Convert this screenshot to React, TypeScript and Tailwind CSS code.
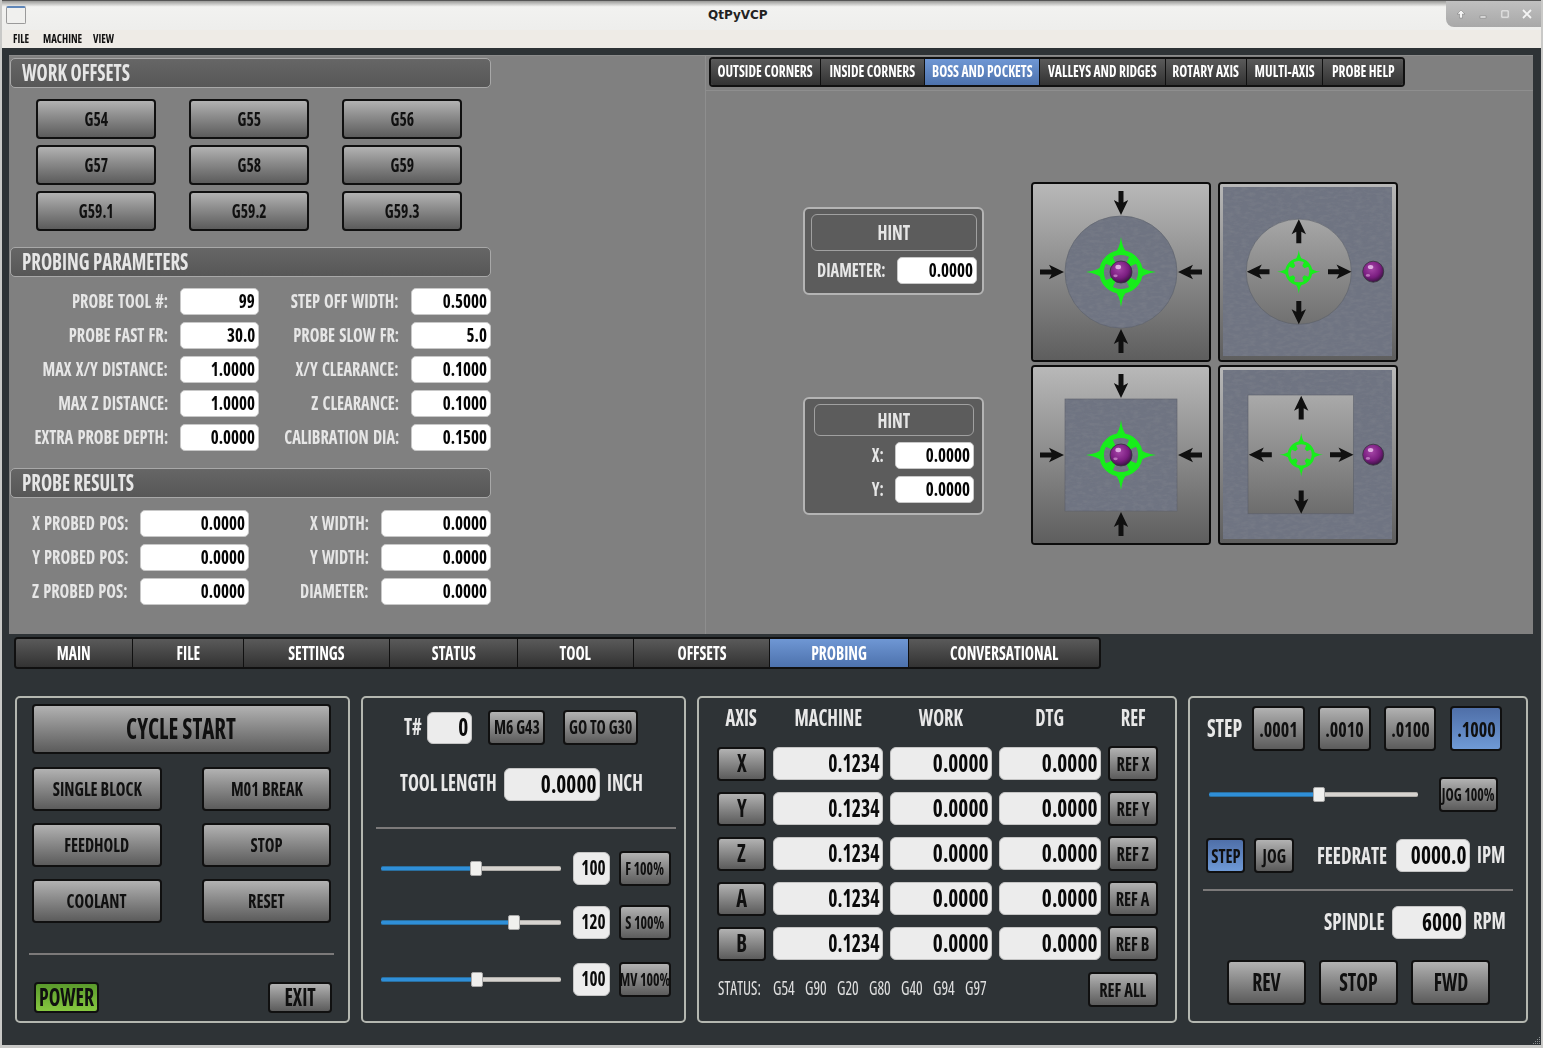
import React from "react";

const btn = "flex items-center justify-center border-2 border-[#101010] rounded-[4px] bg-linear-to-b from-[#b2b2b2] to-[#5c5c5c] text-[#101010]";
const blue = "flex items-center justify-center border-2 border-[#101010] rounded-[4px] bg-linear-to-b from-[#4f6fa8] to-[#6f9ad6] text-[#101010]";
const whiteIn = "flex items-center justify-end bg-white border border-[#c8c8c8] rounded-[5px] text-[#050505] pr-[3px] pb-[1px] h-[27px] text-[20px]";
const grayIn = "flex items-center justify-end bg-[#ececec] border border-[#c4c4c4] rounded-[6px] text-[#0a0a0a] pr-[3px] pb-[2px]";
const label = "flex justify-end text-[#e6e6e6] text-[20px] [word-spacing:1.5px] pb-[1px]";
const header = "ml-[1px] w-[481px] h-[30px] flex items-center pl-[11px] pb-[2px] rounded-[5px] border border-[#a8a8a8] bg-linear-to-b from-[#666666] to-[#575757] text-[#e6e6e6] text-[23px]";
const tabOff = "bg-linear-to-b from-[#5a5a5a] to-[#333333]";
const tabOn = "bg-linear-to-b from-[#6f97d4] to-[#4d72ad]";
const divider = "h-[2px] bg-[#7c7a7a]";

type Origin = "c" | "l" | "r" | "w" | "d";
function T({ children, o = "c" }: { children: React.ReactNode; o?: Origin }) {
  const cls = {
    c: "scale-x-[.82] origin-center",
    l: "scale-x-[.82] origin-left",
    r: "scale-x-[.82] origin-right",
    w: "scale-x-[.85] origin-right",
    d: "scale-x-[.89] origin-right",
  }[o];
  return <span className={`inline-block whitespace-nowrap ${cls}`}>{children}</span>;
}

function Arrow({ x1, y1, x2, y2 }: { x1: number; y1: number; x2: number; y2: number }) {
  const a = (Math.atan2(y2 - y1, x2 - x1) * 180) / Math.PI;
  const L = Math.hypot(x2 - x1, y2 - y1);
  return (
    <g transform={`translate(${x1} ${y1}) rotate(${a})`}>
      <path d={`M0,-2.5 L${L - 12.5},-2.5 L${L - 15},-7.2 L${L},0 L${L - 15},7.2 L${L - 12.5},2.5 L0,2.5 Z`} fill="#101010" />
    </g>
  );
}

function Target({ cx, cy, k }: { cx: number; cy: number; k: number }) {
  const spike = "M-6.5,-18.5 Q-1.5,-23 0,-35 Q1.5,-23 6.5,-18.5 Z";
  const tab = "M-6,-19 L6,-19 L2.5,-10.5 L-2.5,-10.5 Z";
  return (
    <g transform={`translate(${cx} ${cy}) scale(${k})`}>
      {[0, 90, 180, 270].map((r) => (
        <path key={r} d={spike} fill="#17ee1b" transform={`rotate(${r})`} />
      ))}
      {[45, 135, 225, 315].map((r) => (
        <path key={r} d={tab} fill="#17ee1b" transform={`rotate(${r})`} />
      ))}
      <circle r="19.4" fill="none" stroke="#17ee1b" strokeWidth="4.6" />
    </g>
  );
}

function Ball({ cx, cy, r, id }: { cx: number; cy: number; r: number; id: string }) {
  return (
    <g>
      <circle cx={cx} cy={cy} r={r} fill={`url(#${id}-ball)`} stroke="#35333c" strokeWidth="0.8" />
      <ellipse cx={cx - r * 0.25} cy={cy - r * 0.45} rx={r * 0.26} ry={r * 0.2} fill="#e6b8e8" opacity="0.9" />
      <ellipse cx={cx - r * 0.5} cy={cy + r * 0.35} rx={r * 0.2} ry={r * 0.13} fill="#c98ac9" opacity="0.8" />
    </g>
  );
}

function Diagram({ id, kind }: { id: string; kind: "boss" | "pocketRound" | "bossSquare" | "pocketSquare" }) {
  const blueFill = "#6f7482";
  const noise = `url(#${id}-n)`;
  return (
    <div className="w-[180px] h-[180px] rounded-[4px] border-2 border-[#0c0c0c] overflow-hidden">
      <svg viewBox="0 0 176 176" width="176" height="176" className="block">
        <defs>
          <linearGradient id={`${id}-g`} gradientUnits="userSpaceOnUse" x1="0" y1="0" x2="0" y2="176">
            <stop offset="0" stopColor="#b8b8b8" />
            <stop offset="1" stopColor="#5e5e5e" />
          </linearGradient>
          <radialGradient id={`${id}-ball`} cx="0.42" cy="0.35" r="0.7">
            <stop offset="0" stopColor="#a646a8" />
            <stop offset="0.6" stopColor="#7a1d80" />
            <stop offset="1" stopColor="#2f1238" />
          </radialGradient>
          <filter id={`${id}-n`} x="0" y="0" width="100%" height="100%">
            <feTurbulence type="fractalNoise" baseFrequency="0.14 0.32" numOctaves="3" seed="4" />
            <feColorMatrix values="0 0 0 0 0.24  0 0 0 0 0.25  0 0 0 0 0.28  1.6 0 0 0 -0.6" />
            <feComposite in2="SourceAlpha" operator="in" />
          </filter>
        </defs>
        <rect width="176" height="176" fill={`url(#${id}-g)`} />
        {kind === "boss" && (
          <>
            <circle cx="88" cy="88" r="56" fill={blueFill} stroke="#5a5f6a" strokeWidth="0.6" />
            <circle cx="88" cy="88" r="56" fill="#000" filter={noise} opacity="0.45" />
          </>
        )}
        {kind === "bossSquare" && (
          <>
            <rect x="32" y="32" width="112" height="112" fill={blueFill} stroke="#5a5f6a" strokeWidth="0.6" />
            <rect x="32" y="32" width="112" height="112" fill="#000" filter={noise} opacity="0.45" />
          </>
        )}
        {(kind === "pocketRound" || kind === "pocketSquare") && (
          <>
            <rect x="3" y="3" width="169" height="169" fill={blueFill} />
            <rect x="3" y="3" width="169" height="169" fill="#000" filter={noise} opacity="0.45" />
          </>
        )}
        {kind === "pocketRound" && <circle cx="78.8" cy="87.7" r="52.6" fill={`url(#${id}-g)`} stroke="#5a5f6a" strokeWidth="0.6" />}
        {kind === "pocketSquare" && <rect x="28" y="28" width="105.5" height="118.8" fill={`url(#${id}-g)`} stroke="#5a5f6a" strokeWidth="0.6" />}
        {(kind === "boss" || kind === "bossSquare") && (
          <>
            <Arrow x1={88} y1={7} x2={88} y2={31} />
            <Arrow x1={88} y1={169} x2={88} y2={145} />
            <Arrow x1={7} y1={88} x2={31} y2={88} />
            <Arrow x1={169} y1={88} x2={145} y2={88} />
            <Target cx={88} cy={88} k={1} />
            <Ball cx={88} cy={88} r={11} id={id} />
          </>
        )}
        {kind === "pocketRound" && (
          <>
            <Arrow x1={78.8} y1={59.3} x2={78.8} y2={35.3} />
            <Arrow x1={78.8} y1={117} x2={78.8} y2={140.3} />
            <Arrow x1={49.5} y1={87.7} x2={26.8} y2={87.7} />
            <Arrow x1={108} y1={87.7} x2={131.5} y2={87.7} />
            <Target cx={78.8} cy={87.7} k={0.62} />
            <Ball cx={153.2} cy={87.7} r={10.5} id={id} />
          </>
        )}
        {kind === "pocketSquare" && (
          <>
            <Arrow x1={81.2} y1={52.5} x2={81.2} y2={28.8} />
            <Arrow x1={81.2} y1={123.5} x2={81.2} y2={146.8} />
            <Arrow x1={51.8} y1={87.8} x2={28.8} y2={87.8} />
            <Arrow x1={110} y1={87.8} x2={133.5} y2={87.8} />
            <Target cx={81.2} cy={87.8} k={0.62} />
            <Ball cx={153.2} cy={87.7} r={10.5} id={id} />
          </>
        )}
      </svg>
    </div>
  );
}

function Slider({ w, left }: { w: string; left: string }) {
  return (
    <div className={`flex items-center h-[16px] ${w}`}>
      <div className={`h-[5px] bg-[#2f8fd8] rounded-l-[2px] border-y border-[#2a6f9f] ${left}`} />
      <div className="w-[12px] h-[15px] bg-[#f0f0ee] border border-[#a8a8a8] rounded-[2px] shrink-0" />
      <div className="h-[5px] flex-1 bg-[#d6d3cf] border-y border-[#b0aeaa] rounded-r-[2px]" />
    </div>
  );
}

const topTabs: [string, string, boolean][] = [
  ["OUTSIDE CORNERS", "w-[110px]", false],
  ["INSIDE CORNERS", "w-[104px]", false],
  ["BOSS AND POCKETS", "w-[115px]", true],
  ["VALLEYS AND RIDGES", "w-[126px]", false],
  ["ROTARY AXIS", "w-[81px]", false],
  ["MULTI-AXIS", "w-[76px]", false],
  ["PROBE HELP", "w-[80px]", false],
];
const mainTabs: [string, string, boolean][] = [
  ["MAIN", "w-[117px]", false],
  ["FILE", "w-[111px]", false],
  ["SETTINGS", "w-[146px]", false],
  ["STATUS", "w-[128px]", false],
  ["TOOL", "w-[116px]", false],
  ["OFFSETS", "w-[136px]", false],
  ["PROBING", "w-[139px]", true],
  ["CONVERSATIONAL", "w-[190px]", false],
];
const params: [string, string, string, string][] = [
  ["PROBE TOOL #:", "99", "STEP OFF WIDTH:", "0.5000"],
  ["PROBE FAST FR:", "30.0", "PROBE SLOW FR:", "5.0"],
  ["MAX X/Y DISTANCE:", "1.0000", "X/Y CLEARANCE:", "0.1000"],
  ["MAX Z DISTANCE:", "1.0000", "Z CLEARANCE:", "0.1000"],
  ["EXTRA PROBE DEPTH:", "0.0000", "CALIBRATION DIA:", "0.1500"],
];
const results: [string, string, string, string][] = [
  ["X PROBED POS:", "0.0000", "X WIDTH:", "0.0000"],
  ["Y PROBED POS:", "0.0000", "Y WIDTH:", "0.0000"],
  ["Z PROBED POS:", "0.0000", "DIAMETER:", "0.0000"],
];
const offs = ["G54", "G55", "G56", "G57", "G58", "G59", "G59.1", "G59.2", "G59.3"];
const overrides = [
  { mt: "mt-[22px]", left: "w-[89px]", n: "100", t: "F 100%" },
  { mt: "mt-[19px]", left: "w-[127px]", n: "120", t: "S 100%" },
  { mt: "mt-[22px]", left: "w-[90px]", n: "100", t: "MV 100%" },
];

export default function App() {
  return (
    <div className="relative w-[1543px] h-[1048px] overflow-hidden flex flex-col bg-[#2e3336] border-x-2 border-b-[3px] border-[#c9c9c7] font-['Open_Sans',sans-serif] font-stretch-condensed font-bold leading-none">
      {/* title bar */}
      <div className="h-[30px] -mx-[2px] grid grid-cols-[708px_auto_1fr] bg-linear-to-b from-[#9a9a98] via-[#f2f2f0] via-[20%] to-[#eeeeec] border-t border-[#555]">
        <div className="pl-[6px] pt-[5px]">
          <div className="w-[20px] h-[18px] border border-[#9a9a9a] rounded-[2px] bg-[#f0f0ee] border-t-[2px] border-t-[#5f86b8]" />
        </div>
        <div className="pt-[8px] text-[12px] font-['DejaVu_Sans',sans-serif] font-stretch-normal font-bold text-[#222]">QtPyVCP</div>
        <div className="flex justify-end">
          <div className="w-[97px] h-[26px] bg-linear-to-b from-[#c0c0c0] to-[#a8a8a8] rounded-bl-[8px] flex items-center justify-end gap-[12px] pr-[11px]">
            <svg width="10" height="10" viewBox="0 0 10 10"><path d="M5 1 L9 5 L6.5 5 L6.5 9 L3.5 9 L3.5 5 L1 5 Z" fill="#f4f4f4" stroke="#777" strokeWidth="0.5" /></svg>
            <svg width="10" height="10" viewBox="0 0 10 10"><rect x="2" y="7" width="6" height="2" fill="#f4f4f4" stroke="#777" strokeWidth="0.5" /></svg>
            <svg width="10" height="10" viewBox="0 0 10 10"><rect x="1.5" y="1.5" width="7" height="7" fill="none" stroke="#f4f4f4" strokeWidth="1.6" /><rect x="1" y="1" width="8" height="8" fill="none" stroke="#777" strokeWidth="0.4" /></svg>
            <svg width="10" height="10" viewBox="0 0 10 10"><path d="M1 1 L9 9 M9 1 L1 9" stroke="#f4f4f4" strokeWidth="1.8" /></svg>
          </div>
        </div>
      </div>
      {/* menu */}
      <div className="h-[18px] -mx-[2px] flex items-center bg-[#eeebe6] text-[#111] text-[13px] pl-[13px] pb-[2px] gap-[14px]">
        <span className="w-[16px] flex"><T o="l">FILE</T></span>
        <span className="w-[36px] flex"><T o="l">MACHINE</T></span>
        <span className="w-[20px] flex"><T o="l">VIEW</T></span>
      </div>

      <div className="flex-1 flex flex-col pt-[7px]">
        {/* top panel */}
        <div className="ml-[7px] w-[1524px] h-[579px] bg-[#808080] flex border-t border-[#8c8c8c]">
          <div className="w-[696px] shrink-0 pt-[2px]">
            <div className={header}><T o="l">WORK OFFSETS</T></div>
            <div className="ml-[27px] mt-[11px] grid grid-cols-[120px_120px_120px] gap-x-[33px] gap-y-[6px]">
              {offs.map((o) => (
                <div key={o} className={`${btn} h-[40px] text-[19px]`}><T>{o}</T></div>
              ))}
            </div>
            <div className={`${header} mt-[16px]`}><T o="l">PROBING PARAMETERS</T></div>
            <div className="mt-[11px] ml-[1px] flex flex-col gap-[7px]">
              {params.map((r) => (
                <div key={r[0]} className="flex items-center">
                  <div className={`${label} w-[158px]`}><T o="r">{r[0]}</T></div>
                  <div className={`${whiteIn} ml-[12px] w-[79px]`}><T o="w">{r[1]}</T></div>
                  <div className={`${label} w-[140px]`}><T o="r">{r[2]}</T></div>
                  <div className={`${whiteIn} ml-[12px] w-[80px]`}><T o="w">{r[3]}</T></div>
                </div>
              ))}
            </div>
            <div className={`${header} mt-[17px]`}><T o="l">PROBE RESULTS</T></div>
            <div className="mt-[12px] ml-[1px] flex flex-col gap-[7px]">
              {results.map((r) => (
                <div key={r[0]} className="flex items-center">
                  <div className={`${label} w-[118px]`}><T o="r">{r[0]}</T></div>
                  <div className={`${whiteIn} ml-[12px] w-[109px]`}><T o="w">{r[1]}</T></div>
                  <div className={`${label} w-[120px]`}><T o="r">{r[2]}</T></div>
                  <div className={`${whiteIn} ml-[12px] w-[110px]`}><T o="w">{r[3]}</T></div>
                </div>
              ))}
            </div>
          </div>
          <div className="flex-1 border-l border-[#8e8e8e] pt-[1px] flex flex-col">
            <div className="ml-[3px] flex w-fit h-[30px] border-2 border-[#101010] rounded-[4px] overflow-hidden">
              {topTabs.map(([t, w, a]) => (
                <div key={t} className={`${w} flex items-center justify-center pb-[2px] text-[16.5px] border-r border-[#101010] last:border-r-0 text-white ${a ? tabOn : tabOff}`}><T>{t}</T></div>
              ))}
            </div>
            <div className="mt-[3px] border-t border-[#8e8e8e] flex pl-[97px] pt-[91px]">
              <div className="w-[181px] shrink-0 mt-[25px] flex flex-col gap-[102px]">
                <div className="h-[88px] rounded-[6px] border-2 border-[#b4b4b4] bg-[#5c5c5c] flex flex-col pt-[5px] pl-[6px]">
                  <div className="w-[166px] h-[37px] border border-[#a0a0a0] rounded-[6px] flex items-center justify-center text-[#e6e6e6] text-[21px]"><T>HINT</T></div>
                  <div className="mt-[6px] flex items-center">
                    <div className={`${label} w-[75px]`}><T o="r">DIAMETER:</T></div>
                    <div className={`${whiteIn} ml-[11px] w-[80px]`}><T o="w">0.0000</T></div>
                  </div>
                </div>
                <div className="h-[118px] rounded-[6px] border-2 border-[#b4b4b4] bg-[#5c5c5c] flex flex-col pt-[5px] pl-[9px]">
                  <div className="w-[160px] h-[32px] border border-[#a0a0a0] rounded-[6px] flex items-center justify-center text-[#e6e6e6] text-[21px]"><T>HINT</T></div>
                  <div className="mt-[6px] flex items-center">
                    <div className={`${label} w-[70px]`}><T o="r">X:</T></div>
                    <div className={`${whiteIn} ml-[11px] w-[79px]`}><T o="w">0.0000</T></div>
                  </div>
                  <div className="mt-[7px] flex items-center">
                    <div className={`${label} w-[70px]`}><T o="r">Y:</T></div>
                    <div className={`${whiteIn} ml-[11px] w-[79px]`}><T o="w">0.0000</T></div>
                  </div>
                </div>
              </div>
              <div className="ml-[47px] grid grid-cols-[180px_180px] gap-x-[7px] gap-y-[3px] h-fit">
                <Diagram id="a" kind="boss" />
                <Diagram id="b" kind="pocketRound" />
                <Diagram id="c" kind="bossSquare" />
                <Diagram id="d" kind="pocketSquare" />
              </div>
            </div>
          </div>
        </div>

        {/* main tabs */}
        <div className="mt-[3px] ml-[12px] flex w-fit h-[32px] border-2 border-[#101010] rounded-[4px] overflow-hidden">
          {mainTabs.map(([t, w, a]) => (
            <div key={t} className={`${w} flex items-center justify-center text-[19px] border-r border-[#101010] last:border-r-0 text-white ${a ? tabOn : tabOff}`}><T>{t}</T></div>
          ))}
        </div>

        {/* bottom panels */}
        <div className="mt-[27px] ml-[13px] flex gap-[11px]">
          {/* cycle */}
          <div className="w-[335px] h-[327px] border-2 border-[#b4b7b0] rounded-[5px] flex flex-col">
            <div className={`${btn} ml-[15px] mt-[6px] w-[299px] h-[50px] pb-[3px] text-[28px]`}><T>CYCLE START</T></div>
            <div className="ml-[15px] mt-[13px] grid grid-cols-[130px_129px] gap-x-[40px] gap-y-[12px] text-[20px]">
              {["SINGLE BLOCK", "M01 BREAK", "FEEDHOLD", "STOP", "COOLANT", "RESET"].map((t) => (
                <div key={t} className={`${btn} h-[44px]`}><T>{t}</T></div>
              ))}
            </div>
            <div className={`${divider} ml-[12px] mt-[30px] w-[305px]`} />
            <div className="ml-[17px] mt-[27px] w-[298px] flex justify-between text-[24px]">
              <div className="flex items-center justify-center pb-[2px] w-[65px] h-[31px] border-2 border-[#101010] rounded-[4px] bg-linear-to-b from-[#5a9a2c] to-[#86c840] text-[#101010]"><T>POWER</T></div>
              <div className={`${btn} w-[64px] h-[31px] pb-[2px]`}><T>EXIT</T></div>
            </div>
          </div>

          {/* tool */}
          <div className="w-[325px] h-[327px] border-2 border-[#b4b7b0] rounded-[5px] flex flex-col">
            <div className="ml-[41px] mt-[12px] flex items-center">
              <div className="w-[19px] flex text-[#e8e8e8] text-[23px] pb-[2px]"><T o="l">T#</T></div>
              <div className={`${grayIn} ml-[4px] w-[45px] h-[32px] text-[24px]`}><T o="d">0</T></div>
              <div className={`${btn} ml-[16px] w-[57px] h-[35px] text-[19px]`}><T>M6 G43</T></div>
              <div className={`${btn} ml-[18px] w-[75px] h-[35px] text-[19px]`}><T>GO TO G30</T></div>
            </div>
            <div className="ml-[37px] mt-[23px] flex items-center">
              <div className="w-[97px] flex pb-[2px] text-[#e8e8e8] text-[22.5px]"><T o="l">TOOL LENGTH</T></div>
              <div className={`${grayIn} ml-[7px] w-[96px] h-[33px] text-[24px]`}><T o="d">0.0000</T></div>
              <div className="ml-[7px] flex pb-[2px] text-[#e8e8e8] text-[22.5px]"><T o="l">INCH</T></div>
            </div>
            <div className={`${divider} ml-[13px] mt-[26px] w-[300px]`} />
            {overrides.map((r) => (
              <div key={r.t} className={`ml-[18px] flex items-center ${r.mt}`}>
                <Slider w="w-[180px]" left={r.left} />
                <div className={`${grayIn} ml-[12px] w-[37px] h-[33px] text-[21px]`}><T o="r">{r.n}</T></div>
                <div className={`${btn} ml-[9px] w-[52px] h-[35px] text-[17px]`}><T>{r.t}</T></div>
              </div>
            ))}
          </div>

          {/* DRO */}
          <div className="w-[480px] h-[327px] border-2 border-[#b4b7b0] rounded-[5px] flex flex-col">
            <div className="ml-[18px] mt-[8px] h-[24px] grid grid-cols-[49px_110px_102px_102px_50px] gap-x-[7px] items-center text-center text-[#e8e8e8] text-[22.5px]">
              {["AXIS", "MACHINE", "WORK", "DTG", "REF"].map((h) => (
                <div key={h} className="flex justify-center"><T>{h}</T></div>
              ))}
            </div>
            <div className="ml-[18px] mt-[16px] flex flex-col gap-[10px]">
              {["X", "Y", "Z", "A", "B"].map((a) => (
                <div key={a} className="grid grid-cols-[49px_110px_102px_102px_50px] gap-x-[7px] h-[35px] items-center">
                  <div className={`${btn} h-[34px] text-[25px] pb-[2px]`}><T>{a}</T></div>
                  <div className={`${grayIn} h-[33px] text-[24px]`}><T o="r">0.1234</T></div>
                  <div className={`${grayIn} h-[33px] text-[24px]`}><T o="d">0.0000</T></div>
                  <div className={`${grayIn} h-[33px] text-[24px]`}><T o="d">0.0000</T></div>
                  <div className={`${btn} h-[35px] text-[20px]`}><T>{`REF ${a}`}</T></div>
                </div>
              ))}
            </div>
            <div className="ml-[19px] mt-[11px] w-[440px] flex items-center justify-between">
              <div className="flex text-[#e0e0e0] text-[19px] font-medium gap-[8px] mb-[3px]">
                <span className="w-[47px] flex"><T o="l">STATUS:</T></span>
                {["G54", "G90", "G20", "G80", "G40", "G94", "G97"].map((g) => (
                  <span key={g} className="w-[24px] flex"><T o="l">{g}</T></span>
                ))}
              </div>
              <div className={`${btn} w-[70px] h-[35px] text-[20px]`}><T>REF ALL</T></div>
            </div>
          </div>

          {/* jog */}
          <div className="w-[340px] h-[327px] border-2 border-[#b4b7b0] rounded-[5px] flex flex-col">
            <div className="ml-[17px] mt-[8px] flex items-center gap-[13px] text-[22px]">
              <div className="w-[32px] flex pb-[2px] text-[#e8e8e8] text-[24px]"><T o="l">STEP</T></div>
              <div className={`${btn} w-[53px] h-[45px] pb-[2px]`}><T>.0001</T></div>
              <div className={`${btn} w-[53px] h-[45px] pb-[2px]`}><T>.0010</T></div>
              <div className={`${btn} w-[52px] h-[45px] pb-[2px]`}><T>.0100</T></div>
              <div className={`${blue} w-[52px] h-[45px] ml-[1px] pb-[2px]`}><T>.1000</T></div>
            </div>
            <div className="ml-[19px] mt-[26px] flex items-center">
              <Slider w="w-[209px]" left="w-[104px]" />
              <div className={`${btn} ml-[21px] w-[59px] h-[35px] text-[17px]`}><T>JOG 100%</T></div>
            </div>
            <div className="ml-[16px] mt-[26px] flex items-center">
              <div className={`${blue} w-[39px] h-[35px] text-[20px]`}><T>STEP</T></div>
              <div className={`${btn} ml-[9px] w-[40px] h-[35px] text-[20px]`}><T>JOG</T></div>
              <div className="ml-[23px] w-[70px] flex text-[#e8e8e8] text-[23px]"><T o="l">FEEDRATE</T></div>
              <div className={`${grayIn} ml-[9px] w-[74px] h-[33px] text-[24px]`}><T o="d">0000.0</T></div>
              <div className="ml-[7px] flex text-[#e8e8e8] text-[22.5px]"><T o="l">IPM</T></div>
            </div>
            <div className={`${divider} ml-[13px] mt-[16px] w-[310px]`} />
            <div className="ml-[134px] mt-[15px] flex items-center">
              <div className="w-[60px] flex pb-[2px] text-[#e8e8e8] text-[23px]"><T o="l">SPINDLE</T></div>
              <div className={`${grayIn} ml-[8px] w-[74px] h-[33px] text-[24px]`}><T o="d">6000</T></div>
              <div className="ml-[7px] flex pb-[2px] text-[#e8e8e8] text-[22.5px]"><T o="l">RPM</T></div>
            </div>
            <div className="ml-[37px] mt-[21px] flex gap-[13px] text-[24px]">
              <div className={`${btn} w-[79px] h-[45px] pb-[2px]`}><T>REV</T></div>
              <div className={`${btn} w-[79px] h-[45px] pb-[2px]`}><T>STOP</T></div>
              <div className={`${btn} w-[79px] h-[45px] pb-[2px]`}><T>FWD</T></div>
            </div>
          </div>
        </div>
      </div>

      {/* resize grip */}
      <svg className="absolute right-0 bottom-0" width="10" height="10" viewBox="0 0 10 10">
        {[[8, 2], [6, 4], [8, 4], [4, 6], [6, 6], [8, 6], [2, 8], [4, 8], [6, 8], [8, 8]].map(([x, y], i) => (
          <rect key={i} x={x} y={y} width="1" height="1" fill="#8a8e90" />
        ))}
      </svg>
    </div>
  );
}
